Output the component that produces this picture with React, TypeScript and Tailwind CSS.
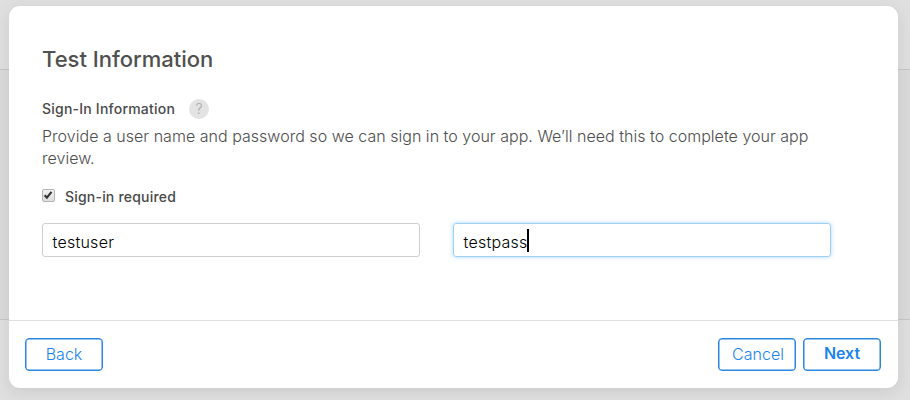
import React from "react";

function HelpBadge() {
  return (
    <span className="flex h-5 w-5 items-center justify-center rounded-full bg-[#e3e3e3] text-[14px] leading-5 font-light text-[#a6a6a6]">
      ?
    </span>
  );
}

function Checkbox() {
  return (
    <span className="-mt-[2px] flex h-[13px] w-[12.5px] items-center justify-center rounded-[2px] border border-[#b4b4b4] bg-linear-to-b from-[#f0f0f0] to-[#dedede]">
      <svg viewBox="0 0 10 10" className="h-[10px] w-[10px]" fill="none" stroke="#333" strokeWidth="2.1">
        <path d="M1.6 5.3 3.9 7.6 8.5 1.8" />
      </svg>
    </span>
  );
}

export default function App() {
  return (
    <div className="flex h-[400px] w-[910px] flex-col overflow-hidden bg-[#dfdfdf] font-['Inter','Liberation_Sans',sans-serif]">
      <div className="h-[320px] shrink-0 border-b border-[#c6c6c6] bg-[#dadada]">
        <div className="h-[70px] border-b border-[#c6c6c6] bg-[#dfdfdf] pt-[6px] pl-[9px]">
          <main className="relative flex h-[382px] w-[889px] flex-col rounded-[11px] bg-white shadow-[0_4px_16px_rgba(0,0,0,0.09)]">
            <section className="h-[315px] border-b border-[#e0e0e0] pl-[33px] pt-[39px]">
              <h1 className="h-7 text-[22px] leading-7 font-medium tracking-[-0.01px] whitespace-nowrap text-[#505050]">
                Test Information
              </h1>
              <div className="mt-[26px] flex h-5 items-center">
                <h2 className="w-[147px] text-[14px] leading-5 font-medium tracking-[0.22px] whitespace-nowrap text-[#494949]">
                  Sign-In Information
                </h2>
                <HelpBadge />
              </div>
              <p className="mt-[6px] text-[16px] leading-[22px] font-light tracking-[0.027px] whitespace-nowrap text-[#4d4d4d]">
                Provide a user name and password so we can sign in to your app. We’ll need this to complete your app
                <br />
                review.
              </p>
              <label className="mt-[17px] flex h-5 items-center gap-[10.5px] text-[14px] font-medium tracking-[0.2px] text-[#494949]">
                <Checkbox />
                <span>Sign-in required</span>
              </label>
              <div className="mt-[17px] flex gap-[33px] text-[16px] font-light tracking-[0.25px] text-black">
                <div className="flex h-[34px] w-[378px] items-center rounded-[3px] border border-[#cfcfcf] pt-[3px] pl-[9.5px]">
                  <span>testuser</span>
                </div>
                <div className="flex h-[34px] w-[378px] items-center rounded-[3px] border border-[#9fd0fa] pt-[3px] pl-[9.5px] shadow-[0_0_4px_rgba(90,175,250,0.5)]">
                  <span>testpass</span>
                  <span className="-mt-[2px] -ml-[0.5px] h-[23px] w-[1.5px] bg-black" />
                </div>
              </div>
            </section>
            <footer className="flex items-start pt-[17px] pr-[17px] pl-4 text-[16px] text-[#1a84ee]">
              <button className="h-[33px] w-[78px] rounded-[4px] border border-[#2a87df] pb-[2px] font-light shadow-[inset_0_0_0_0.5px_#2a87df]">
                Back
              </button>
              <button className="ml-auto h-[33px] w-[78px] rounded-[4px] border border-[#2a87df] pb-[2px] pl-[2px] font-light shadow-[inset_0_0_0_0.5px_#2a87df]">
                Cancel
              </button>
              <button className="ml-[7px] h-[33px] w-[78px] rounded-[4px] border border-[#2a87df] pb-[3px] font-semibold tracking-[-0.1px] shadow-[inset_0_0_0_0.5px_#2a87df]">
                Next
              </button>
            </footer>
          </main>
        </div>
      </div>
    </div>
  );
}
